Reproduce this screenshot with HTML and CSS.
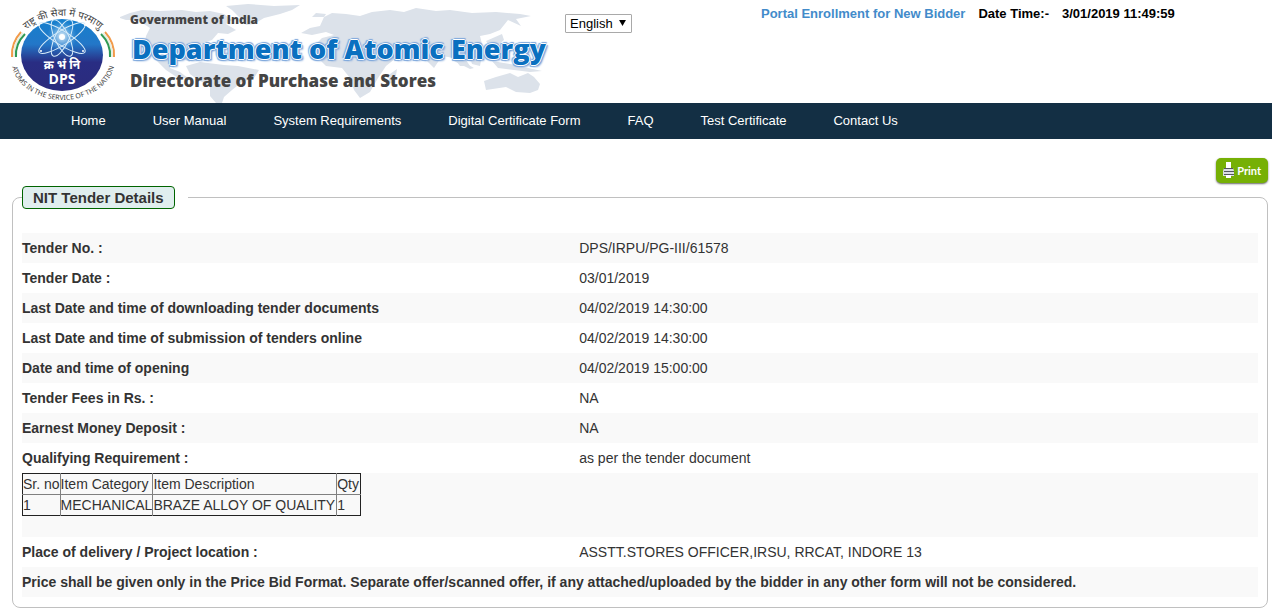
FILE: index.html
```html
<!DOCTYPE html>
<html lang="en">
<head>
<meta charset="utf-8">
<title>NIT Tender Details</title>
<link rel="stylesheet" href="styles.css">
</head>
<body>
<header class="header">
  <div class="banner">
    <svg class="banner-map" viewBox="0 0 430 103" aria-hidden="true">
      <path d="M0 17 L10 13 22 10 40 11 62 10 76 12 90 11 104 14 112 20 106 24 116 30 108 34 98 33 92 40 80 44 74 50 68 56 70 62 60 58 50 60 50 68 60 72 68 78 58 78 46 70 36 60 24 48 26 36 30 28 18 20 6 20 0 18Z"/>
      <path d="M106 6 L128 4 154 6 180 5 172 10 160 14 144 18 134 24 126 25 120 18 112 10Z"/>
      <path d="M66 66 L80 62 104 65 118 66 139 70 134 78 122 82 112 90 104 97 102 103 96 103 90 96 90 86 78 80 70 74Z"/>
      <path d="M181 33 L190 28 200 26 204 17 212 13 226 14 240 16 252 12 270 10 284 12 296 8 316 11 330 10 352 13 376 12 400 14 411 16 396 19 401 26 388 20 380 30 370 34 360 36 362 44 354 52 346 60 350 66 340 66 334 58 322 56 314 68 306 60 296 54 282 60 276 58 266 66 258 78 250 92 240 98 234 90 230 78 222 68 206 66 198 58 194 46 202 38 214 35 206 32 192 35Z"/>
      <path d="M204 17 L192 17 196 13 206 14Z M270 74 L277 69 275 82 268 84Z"/>
      <path d="M336 58 L354 68 350 69 334 61Z M350 57 L362 55 360 66 352 64Z M372 61 L390 64 422 71 410 72 378 68Z"/>
      <path d="M364 81 L376 77 390 73 398 77 408 73 414 77 420 84 418 90 410 93 396 92 386 87 366 90Z"/>
      <path d="M366 41 L382 34 384 40 372 50Z"/>
    </svg>
    <svg class="seal" viewBox="0 0 130 103" role="img" aria-label="DPS seal, Atoms in the service of the nation">
      <defs>
        <linearGradient id="disc" x1="0" y1="0" x2="0" y2="1">
          <stop offset="0" stop-color="#1580cd"/>
          <stop offset=".35" stop-color="#2377c8"/>
          <stop offset=".6" stop-color="#292d83"/>
          <stop offset="1" stop-color="#2b2b7d"/>
        </linearGradient>
        <radialGradient id="glow">
          <stop offset="0" stop-color="#fff" stop-opacity=".9"/>
          <stop offset="1" stop-color="#7cc4f2" stop-opacity="0"/>
        </radialGradient>
        <path id="arc-top" d="M20 36 A56 56 0 0 1 106 36"/>
        <path id="arc-bottom" d="M11 50 V59 A52 41 0 0 0 115 59 V50"/>
      </defs>
      <g fill="none" stroke-width="2">
        <path stroke="#f29a4a" d="M21 32 Q11 43 12 57 M105 32 Q115 43 114 57"/>
        <path stroke="#e8efe2" d="M23 33 Q13 44 14 57 M103 33 Q113 44 112 57"/>
        <path stroke="#2f9a55" d="M25 34 Q15 44 16 57 M101 34 Q111 44 110 57"/>
      </g>
      <ellipse cx="62" cy="55" rx="41" ry="36" fill="url(#disc)"/>
      <circle cx="62" cy="36" r="15" fill="url(#glow)"/>
      <g fill="none" stroke="#d7ecfa" stroke-width="1">
        <ellipse cx="62" cy="38" rx="27" ry="7" transform="rotate(32 62 38)"/>
        <ellipse cx="62" cy="38" rx="27" ry="7" transform="rotate(-32 62 38)"/>
        <ellipse cx="62" cy="38" rx="20" ry="7" transform="rotate(64 62 38)"/>
        <ellipse cx="62" cy="38" rx="20" ry="7" transform="rotate(-64 62 38)"/>
      </g>
      <circle cx="62" cy="37" r="3" fill="#fff"/>
      <g fill="#fff">
        <circle cx="39" cy="25" r="1"/><circle cx="85" cy="25" r="1"/>
        <circle cx="41" cy="51" r="1"/><circle cx="83" cy="51" r="1"/>
      </g>
      <text class="seal-motto" x="62" y="69">क्र भं नि</text>
      <text class="seal-dps" x="62" y="84">DPS</text>
      <text class="seal-ring seal-hindi"><textPath href="#arc-top" startOffset="50%">राष्ट्र की सेवा में परमाणु</textPath></text>
      <text class="seal-ring seal-english"><textPath href="#arc-bottom" startOffset="50%">ATOMS IN THE SERVICE OF THE NATION</textPath></text>
    </svg>
    <div class="titles">
      <p class="title-small">Government of India</p>
      <h1 class="title-main">Department of Atomic Energy</h1>
      <p class="title-sub">Directorate of Purchase and Stores</p>
    </div>
  </div>
  <div class="language">
    <select class="language-select" aria-label="Language"><option>English</option></select>
    <svg class="language-arrow" viewBox="0 0 8 7" aria-hidden="true"><path d="M0 0h8L4 7z"/></svg>
  </div>
  <div class="status">
    <a class="enroll" href="#">Portal Enrollment for New Bidder</a>
    <span>Date Time:-</span>
    <time class="clock">3/01/2019 11:49:59</time>
  </div>
</header>
<nav class="nav">
  <a href="#">Home</a>
  <a href="#">User Manual</a>
  <a href="#">System Requirements</a>
  <a href="#">Digital Certificate Form</a>
  <a href="#">FAQ</a>
  <a href="#">Test Certificate</a>
  <a href="#">Contact Us</a>
</nav>
<main class="main">
  <div class="actions">
    <button class="print" type="button">
      <svg class="print-icon" viewBox="0 0 12 17" aria-hidden="true">
        <path fill="#fff" d="M3 0h5v7H3z"/>
        <path fill="#dcdde4" d="M1 6h9l1 3v5H0V9z"/>
        <path fill="#53565f" d="M1 6h9v1H1zM1 9h10v1H1zM1 12h10v1H1z"/>
        <path fill="#fff" d="M3 13h5v3H3z"/>
      </svg>
      <span>Print</span>
    </button>
  </div>
  <fieldset class="panel">
    <legend class="legend"><span class="legend-label">NIT Tender Details</span></legend>
    <table class="details">
      <tbody>
        <tr><th scope="row">Tender No. :</th><td>DPS/IRPU/PG-III/61578</td></tr>
        <tr><th scope="row">Tender Date :</th><td>03/01/2019</td></tr>
        <tr><th scope="row">Last Date and time of downloading tender documents</th><td>04/02/2019 14:30:00</td></tr>
        <tr><th scope="row">Last Date and time of submission of tenders online</th><td>04/02/2019 14:30:00</td></tr>
        <tr><th scope="row">Date and time of opening</th><td>04/02/2019 15:00:00</td></tr>
        <tr><th scope="row">Tender Fees in Rs. :</th><td>NA</td></tr>
        <tr><th scope="row">Earnest Money Deposit :</th><td>NA</td></tr>
        <tr><th scope="row">Qualifying Requirement :</th><td>as per the tender document</td></tr>
        <tr class="items-row">
          <td colspan="2">
            <table class="items">
              <thead><tr><th>Sr. no</th><th>Item Category</th><th>Item Description</th><th>Qty</th></tr></thead>
              <tbody><tr><td>1</td><td>MECHANICAL</td><td>BRAZE ALLOY OF QUALITY</td><td>1</td></tr></tbody>
            </table>
          </td>
        </tr>
        <tr><th scope="row">Place of delivery / Project location :</th><td>ASSTT.STORES OFFICER,IRSU, RRCAT, INDORE 13</td></tr>
        <tr><th colspan="2">Price shall be given only in the Price Bid Format. Separate offer/scanned offer, if any attached/uploaded by the bidder in any other form will not be considered.</th></tr>
      </tbody>
    </table>
  </fieldset>
</main>
</body>
</html>
```
FILE: styles.css
```css
* { box-sizing: border-box; }

body {
  margin: 0;
  background: #fff;
  color: #333;
  font: 14px/20px "Liberation Sans", Arial, sans-serif;
}

.header {
  display: flex;
  align-items: flex-start;
  height: 103px;
}

.banner {
  position: relative;
  display: flex;
  flex: none;
  width: 565px;
}

.banner-map {
  position: absolute;
  left: 120px;
  top: 0;
  width: 430px;
  height: 103px;
  fill: #dce2ea;
}

.seal {
  position: relative;
  flex: none;
  width: 130px;
  height: 103px;
}

.seal text {
  text-anchor: middle;
}

.seal-motto {
  fill: #fff;
  font: 700 12px "Noto Sans Devanagari", "Noto Sans", sans-serif;
}

.seal-dps {
  fill: #fff;
  font: 700 14px "Open Sans", sans-serif;
}

.seal-ring {
  fill: #444;
}

.seal-hindi {
  font: 10px "Noto Sans Devanagari", "Noto Sans", sans-serif;
}

.seal-english {
  font: 7px "Noto Sans", sans-serif;
}

.titles {
  position: relative;
  padding-top: 12px;
  font-family: "Open Sans", sans-serif;
  font-weight: 800;
  white-space: nowrap;
  color: #444;
}

.titles p,
.titles h1 {
  margin: 0;
}

.title-small {
  font-size: 12px;
  line-height: 16px;
}

.title-main {
  padding-left: 2px;
  font-size: 27px;
  font-weight: 800;
  line-height: 42px;
  color: #0a70c0;
  text-shadow: 1px 0 #fff, -1px 0 #fff, 0 1px #fff, 0 -1px #fff,
    2px 1px 1px #7fa8dc, -2px -1px 1px #7fa8dc, -1px 2px 1px #7fa8dc, 1px -2px 1px #7fa8dc, 2px 2px 2px #8fb0dd;
}

.title-sub {
  font-size: 17px;
  line-height: 22px;
}

.language {
  position: relative;
  flex: none;
  height: 19px;
  margin-top: 14px;
}

.language-select {
  display: block;
  width: 67px;
  height: 19px;
  padding: 0 4px;
  border: 1px solid #a9a9a9;
  border-radius: 1px;
  background: #fff;
  color: #000;
  font: 13px "Liberation Sans", Arial, sans-serif;
  appearance: none;
}

.language-arrow {
  position: absolute;
  right: 6px;
  top: 6px;
  width: 7px;
  height: 6px;
  pointer-events: none;
}

.status {
  display: flex;
  gap: 13px;
  margin-left: 129px;
  padding-top: 4px;
  color: #000;
  font-size: 13px;
  font-weight: 700;
  white-space: nowrap;
}

.enroll {
  color: #428bca;
  text-decoration: none;
}

.nav {
  display: flex;
  gap: 47px;
  padding: 8px 71px;
  background: #132f44;
}

.nav a {
  color: #fff;
  font-size: 13px;
  text-decoration: none;
}

.main {
  padding: 19px 4px 0 12px;
}

.actions {
  display: flex;
  justify-content: flex-end;
  margin-bottom: 3px;
}

.print {
  display: flex;
  align-items: center;
  gap: 2px;
  height: 25px;
  padding: 0 7px;
  border: 0;
  border-radius: 5px;
  background: #76b005;
  box-shadow: 0 1px 2px #666;
  color: #fff;
  font: 700 11px Lato, sans-serif;
}

.print-icon {
  width: 12px;
  height: 17px;
}

.panel {
  min-width: 0;
  margin: 0;
  padding: 24px 9px 10px;
  border: 1px solid #c0c0c0;
  border-radius: 8px;
}

.legend {
  padding: 0 13px 0 0;
}

.legend-label {
  display: block;
  padding: 0 10px;
  border: 1px solid #006400;
  border-radius: 4px;
  background: #e0eeee;
  font-size: 15px;
  font-weight: 700;
  line-height: 21px;
}

.details {
  width: 100%;
  table-layout: fixed;
  border-collapse: collapse;
}

.details > tbody > tr:nth-child(odd) {
  background: #f9f9f9;
}

.details th,
.details td {
  padding: 5px 0;
  text-align: left;
  vertical-align: top;
}

.details > tbody > tr > th {
  width: 45%;
}

.details > tbody > tr > td {
  padding-left: 1px;
}

.details > tbody > .items-row > td {
  padding: 0 0 21px;
}

.items {
  border: 1px solid #222;
  border-collapse: collapse;
}

.details .items th,
.details .items td {
  padding: 0;
  font-weight: 400;
}

.details .items td {
  border-top: 1px solid #808080;
}

.items th + th,
.items td + td {
  border-left: 1px solid #808080;
}

.details .items :nth-child(n + 3) {
  padding-right: 1px;
}
```
